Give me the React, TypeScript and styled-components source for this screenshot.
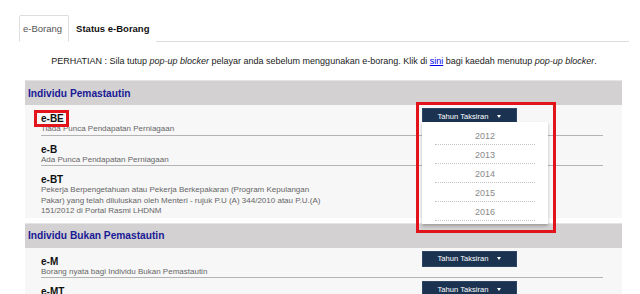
import * as React from 'react';
import styled, { createGlobalStyle } from 'styled-components';

const GlobalStyle = createGlobalStyle`
    body {
        margin: 0;
        background: #ffffff;
        font-family: 'Liberation Sans', Arial, sans-serif;
    }
`;

const Page = styled.div`
    width: 610px;
    margin-left: 19px;
    padding-top: 15px;
`;

const TabBar = styled.div`
    display: flex;
    border-bottom: 1px solid #dddddd;
    height: 26px;
`;

const Tab = styled.div<{ active?: boolean }>`
    display: flex;
    align-items: center;
    padding: 0 6px 0 ${(p) => (p.active ? '3px' : '6px')};
    font-size: 9.5px;
    margin-bottom: -1px;
    color: ${(p) => (p.active ? '#555555' : '#111111')};
    font-weight: ${(p) => (p.active ? 'normal' : 'bold')};
    background: #ffffff;
    border: 1px solid ${(p) => (p.active ? '#dddddd' : 'transparent')};
    border-bottom-color: ${(p) => (p.active ? '#ffffff' : 'transparent')};
    border-radius: 2px 2px 0 0;
`;

const Notice = styled.p`
    margin: 0;
    padding: 13px 0 13px;
    text-align: center;
    font-size: 9px;
    line-height: 12px;
    color: #222222;
    a {
        color: #0000ee;
    }
`;

const Section = styled.div`
    margin: 0 7px 5px 6px;
`;

const SectionHeader = styled.div`
    height: 25px;
    box-sizing: border-box;
    display: flex;
    align-items: center;
    padding-left: 3px;
    background: #d3d1d1;
    border-top: 1px solid #e4e4e4;
    color: #1a1a96;
    font-size: 10.2px;
    font-weight: bold;
`;

const SectionBody = styled.div`
    background: #f7f7f7;
`;

const Row = styled.div<{ last?: boolean }>`
    display: grid;
    grid-template-columns: 381px 1fr;
    margin: 0 19px 0 16px;
    padding-top: 8px;
    border-bottom: 1px solid ${(p) => (p.last ? 'transparent' : '#b4b4b4')};
`;

const FormName = styled.div`
    position: relative;
    font-size: 10px;
    line-height: 11px;
    font-weight: bold;
    color: #111111;
`;

const FormDesc = styled.div`
    width: 280px;
    font-size: 8px;
    line-height: 10.5px;
    color: #666666;
`;

const ButtonCell = styled.div`
    position: relative;
    margin-top: -5px;
`;

const YearButton = styled.div`
    width: 95px;
    height: 16px;
    box-sizing: border-box;
    display: flex;
    align-items: center;
    justify-content: center;
    gap: 9px;
    background: #1b3351;
    border: 1px solid #2d4565;
    color: #ffffff;
    font-size: 7.6px;
`;

const Caret = styled.span`
    width: 0;
    height: 0;
    border-left: 2.5px solid transparent;
    border-right: 2.5px solid transparent;
    border-top: 3px solid #ffffff;
`;

const Menu = styled.div`
    position: absolute;
    top: 14px;
    left: 0;
    width: 126px;
    padding: 4px 0 3px;
    background: #ffffff;
    box-shadow: 0 2px 3px rgba(0, 0, 0, 0.25);
    z-index: 2;
`;

const MenuItem = styled.div`
    margin: 0 13px;
    padding: 4px 0 2px;
    border-bottom: 1px dotted #c4c4c4;
    text-align: center;
    font-size: 9px;
    line-height: 12px;
    color: #8a8a8a;
`;

const Highlight = styled.div<{ top: number; left: number; w: number; h: number }>`
    position: absolute;
    top: ${(p) => p.top}px;
    left: ${(p) => p.left}px;
    width: ${(p) => p.w}px;
    height: ${(p) => p.h}px;
    box-sizing: border-box;
    border: 3px solid #e3131b;
    z-index: 3;
    pointer-events: none;
`;

interface IForm {
    name: string;
    desc: string;
    mark?: boolean;
    open?: boolean;
}

const resident: IForm[] = [
    { name: 'e-BE', desc: 'Tiada Punca Pendapatan Perniagaan', mark: true, open: true },
    { name: 'e-B', desc: 'Ada Punca Pendapatan Perniagaan' },
    {
        name: 'e-BT',
        desc: 'Pekerja Berpengetahuan atau Pekerja Berkepakaran (Program Kepulangan Pakar) yang telah diluluskan oleh Menteri - rujuk P.U (A) 344/2010 atau P.U.(A) 151/2012 di Portal Rasmi LHDNM',
    },
];

const nonResident: IForm[] = [
    { name: 'e-M', desc: 'Borang nyata bagi Individu Bukan Pemastautin' },
    { name: 'e-MT', desc: 'Borang nyata bagi Individu Bukan Pemastautin' },
];

const years = ['2012', '2013', '2014', '2015', '2016'];

const FormRow = ({ form, last, button }: { form: IForm; last?: boolean; button: boolean }) => (
    <Row last={last}>
        <div>
            <FormName>
                {form.name}
                {form.mark && <Highlight top={-3} left={-7} w={35} h={17} />}
            </FormName>
            <FormDesc>{form.desc}</FormDesc>
        </div>
        <ButtonCell>
            {button && (
                <YearButton>
                    Tahun Taksiran <Caret />
                </YearButton>
            )}
            {form.open && (
                <>
                    <Menu>
                        {years.map((y) => (
                            <MenuItem key={y}>{y}</MenuItem>
                        ))}
                    </Menu>
                    <Highlight top={-6} left={-6} w={140} h={131} />
                </>
            )}
        </ButtonCell>
    </Row>
);

const App = () => (
    <Page>
        <GlobalStyle />
        <TabBar>
            <Tab active>e-Borang</Tab>
            <Tab>Status e-Borang</Tab>
        </TabBar>
        <Notice>
            PERHATIAN : Sila tutup <i>pop-up blocker</i> pelayar anda sebelum menggunakan e-borang. Klik di{' '}
            <a href="#">sini</a> bagi kaedah menutup <i>pop-up blocker</i>.
        </Notice>
        <Section>
            <SectionHeader>Individu Pemastautin</SectionHeader>
            <SectionBody>
                {resident.map((f, i) => (
                    <FormRow key={f.name} form={f} last={i === resident.length - 1} button={i === 0} />
                ))}
            </SectionBody>
        </Section>
        <Section>
            <SectionHeader>Individu Bukan Pemastautin</SectionHeader>
            <SectionBody>
                {nonResident.map((f) => (
                    <FormRow key={f.name} form={f} button />
                ))}
            </SectionBody>
        </Section>
    </Page>
);

export default App;
